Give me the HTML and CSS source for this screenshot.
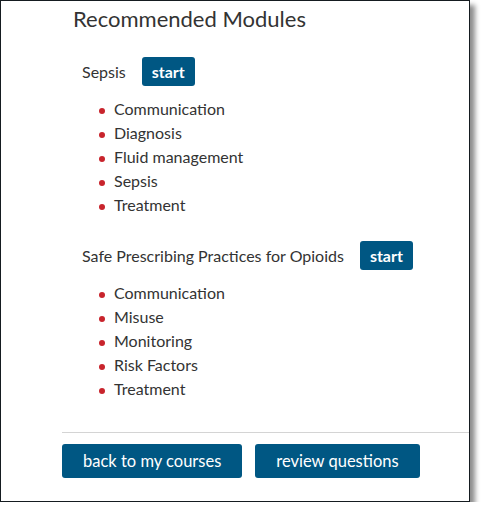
FILE: index.html
```html
<!DOCTYPE html>
<html>
<head>
<meta charset="utf-8">
<link rel="stylesheet" href="styles.css">
</head>
<body>
<div class="frame">
  <h2 class="title">Recommended Modules</h2>
  <div class="module">
    <div class="module-head">
      <span class="module-name">Sepsis</span>
      <button class="btn btn-start">start</button>
    </div>
    <ul class="topics">
      <li>Communication</li>
      <li>Diagnosis</li>
      <li>Fluid management</li>
      <li>Sepsis</li>
      <li>Treatment</li>
    </ul>
  </div>
  <div class="module">
    <div class="module-head">
      <span class="module-name">Safe Prescribing Practices for Opioids</span>
      <button class="btn btn-start">start</button>
    </div>
    <ul class="topics">
      <li>Communication</li>
      <li>Misuse</li>
      <li>Monitoring</li>
      <li>Risk Factors</li>
      <li>Treatment</li>
    </ul>
  </div>
  <div class="footer">
    <button class="btn btn-action">back to my courses</button>
    <button class="btn btn-action">review questions</button>
  </div>
</div>
</body>
</html>
```

FILE: styles.css
```css
html, body {
  margin: 0;
  padding: 0;
  background: #fff;
}
body {
  font-family: Lato, "Open Sans", sans-serif;
  color: #333;
}
.frame {
  box-sizing: border-box;
  width: 470px;
  height: 502px;
  border: 1px solid #151b20;
  box-shadow: 5px 5px 5px rgba(0, 0, 0, 0.45);
  padding: 5px 0 0 61px;
  background: #fff;
}
.title {
  margin: 0 0 25px 11px;
  font-size: 22px;
  font-weight: 400;
  line-height: 26px;
  color: #333;
}
.module {
  padding-left: 20px;
  margin-bottom: 24px;
}
.module-head {
  display: flex;
  align-items: center;
  gap: 16px;
  height: 29px;
}
.module-name {
  font-size: 16px;
  line-height: 24px;
}
.btn {
  font-family: Lato, "Open Sans", sans-serif;
  background: #005783;
  color: #fff;
  border: none;
  border-radius: 3px;
  cursor: pointer;
}
.btn-start {
  height: 29px;
  padding: 0 10px;
  font-size: 16px;
  font-weight: 700;
}
.topics {
  list-style: none;
  margin: 11px 0 0 0;
  padding: 0 0 0 32px;
}
.topics li {
  position: relative;
  font-size: 16px;
  line-height: 24px;
}
.topics li::before {
  content: "";
  position: absolute;
  left: -15px;
  top: 11px;
  width: 6px;
  height: 6px;
  border-radius: 50%;
  background: #c8242c;
}
.footer {
  margin-top: 31px;
  border-top: 1px solid #d4d4d4;
  padding-top: 11px;
  display: flex;
  gap: 13px;
}
.btn-action {
  height: 34px;
  padding: 0 21px;
  font-size: 16.5px;
}
```
